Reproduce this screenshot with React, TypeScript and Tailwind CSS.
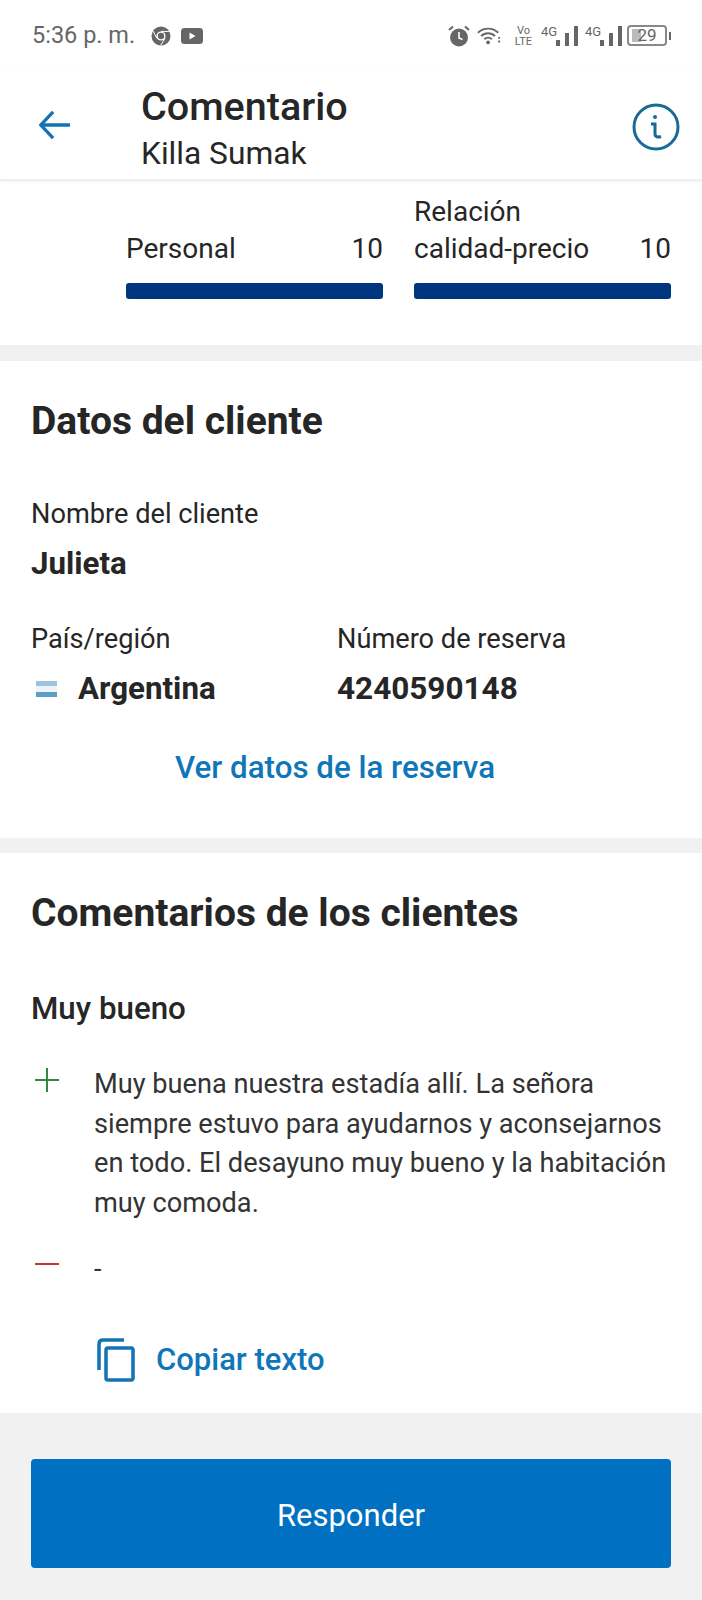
import React from 'react';

function StatusBar() {
  return (
    <div className="h-[71px] flex items-center justify-between pl-8 pr-[31px] text-[#666]">
      <div className="flex items-center">
        <span className="text-[23.5px] leading-none mr-[16px]">5:36 p. m.</span>
        <svg width="20" height="20" viewBox="0 0 20 20" className="mr-[10px]">
          <circle cx="10" cy="10" r="9.5" fill="#666" />
          <circle cx="10" cy="10" r="4.6" fill="#fff" />
          <circle cx="10" cy="10" r="3.2" fill="#666" />
          <path d="M10 5.4h8.6M6 12.5 2 5M14 12.5 9.500 19.400" stroke="#fff" strokeWidth="1" />
        </svg>
        <svg width="22" height="16" viewBox="0 0 22 16">
          <rect width="22" height="16" rx="3.5" fill="#666" />
          <path d="M8.5 4.500v7l6-3.500z" fill="#fff" />
        </svg>
      </div>
      <div className="flex items-center">
        <svg width="22" height="22" viewBox="0 0 22 22" className="mr-[7px]">
          <circle cx="11" cy="12.5" r="9" fill="#666" />
          <path d="M11 7v6l3.500 1.500" stroke="#fff" strokeWidth="1.6" fill="none" />
          <path d="M1 5l4-3.500M21 5l-4-3.500" stroke="#666" strokeWidth="2" />
        </svg>
        <svg width="24" height="20" viewBox="0 0 26 20" className="mr-[13px]">
          <path d="M1 6.500c6-6 16-6 22 0M4.500 10c4-4 11-4 15 0M8 13.500c2.300-2.200 5.700-2.200 8 0" stroke="#666" strokeWidth="2" fill="none" />
          <circle cx="12" cy="17" r="2" fill="#666" />
          <path d="M24 11v2M24 15v2" stroke="#666" strokeWidth="2" />
        </svg>
        <div className="flex flex-col items-center text-[11px] leading-[11px] w-[19px] mr-[8px]">
          <span>Vo</span>
          <span>LTE</span>
        </div>
        <Signal />
        <Signal />
        <div className="flex items-center -ml-[2px]">
          <div className="relative w-[40px] h-[21px] border-2 border-[#888] rounded-[4px] flex items-center justify-center text-[17px] leading-none">
            <div className="absolute left-[3px] top-[2px] bottom-[2px] w-[9px] bg-[#bbb]" />
            <span className="relative">29</span>
          </div>
          <div className="w-[2px] h-[8px] bg-[#666] ml-[2px]" />
        </div>
      </div>
    </div>
  );
}

function Signal() {
  return (
    <div className="flex items-end h-[21px] w-[44px]">
      <span className="text-[13px] leading-none self-start w-[15px] whitespace-nowrap">4G</span>
      <div className="flex items-end gap-[5px]">
        <div className="w-[4px] h-[6px] bg-[#666]" />
        <div className="w-[4px] h-[13px] bg-[#666]" />
        <div className="w-[4px] h-[20px] bg-[#666]" />
      </div>
    </div>
  );
}

function Header() {
  return (
    <div className="h-[110px] flex items-start bg-white border-b-2 border-[#eee] relative shadow-[0_1px_3px_rgba(0,0,0,0.05)]">
      <svg width="32" height="32" viewBox="0 0 34 34" className="ml-[39px] mt-[38px]" fill="none" stroke="#1273b5" strokeWidth="3.500">
        <path d="M1 17h32M15 3 2 17l13 14" />
      </svg>
      <div className="ml-[70px] mt-[14px]">
        <div className="text-[39.5px] leading-[44px] font-medium text-[#262626]">Comentario</div>
        <div className="text-[31.700px] leading-[36px] text-[#262626] mt-[7px]">Killa Sumak</div>
      </div>
      <svg width="48" height="48" viewBox="0 0 48 48" className="ml-auto mr-[22px] mt-[32px]" fill="none" stroke="#176b95" strokeWidth="3">
        <circle cx="24" cy="24" r="22" />
        <circle cx="23" cy="14" r="2" fill="#176b95" stroke="none" />
        <path d="M19 21h4v10c0 3 3 3.500 6 2.500" />
      </svg>
    </div>
  );
}

function Score({ label, sub }: { label: string; sub?: string }) {
  return (
    <div className="w-[257px]">
      <div className="flex justify-between items-end text-[28px] leading-[37px] text-[#262626]">
        <div>
          {sub && <div>{sub}</div>}
          <div>{label}</div>
        </div>
        <div>10</div>
      </div>
      <div className="h-[16px] bg-[#003580] rounded-[3px] mt-[16px]" />
    </div>
  );
}

export default function App() {
  return (
    <div className="w-[702px] h-[1600px] bg-white flex flex-col overflow-hidden font-['Roboto',sans-serif]">
      <StatusBar />
      <Header />

      <section className="h-[160px] flex justify-end gap-[31px] pr-[31px] pt-[4px] border-b-[16px] border-[#f1f1f1] box-content">
        <div className="flex gap-[31px] items-end h-[114px]">
          <Score label="Personal" />
          <Score sub="Relación" label="calidad-precio" />
        </div>
      </section>

      <section className="h-[477px] px-[31px] pt-[38px] text-[#262626] flex flex-col">
        <h2 className="text-[39px] leading-[44px] font-bold">Datos del cliente</h2>
        <div className="text-[27.200px] leading-[34px] mt-[54px]">Nombre del cliente</div>
        <div className="text-[31.300px] leading-[38px] font-bold mt-[14px]">Julieta</div>
        <div className="flex mt-[39px]">
          <div className="w-[306px]">
            <div className="text-[27.200px] leading-[34px]">País/región</div>
            <div className="flex items-center mt-[14px]">
              <div className="w-[21px] h-[16px] flex flex-col mr-[21px] ml-[5px]">
                <div className="flex-1 bg-[#9cc4e0]" />
                <div className="flex-1 bg-[#eef4f8]" />
                <div className="flex-1 bg-[#5b9fc4]" />
              </div>
              <span className="text-[31.300px] leading-[38px] font-bold">Argentina</span>
            </div>
          </div>
          <div>
            <div className="text-[27.200px] leading-[34px]">Número de reserva</div>
            <div className="text-[31.500px] leading-[38px] font-bold mt-[14px]">4240590148</div>
          </div>
        </div>
        <div className="text-[31.300px] leading-[38px] font-medium text-[#0f76b8] text-center pr-[32px] mt-[41px]">Ver datos de la reserva</div>
      </section>

      <div className="h-[15px] bg-[#f1f1f1]" />

      <section className="flex-1 px-[31px] pt-[38px] text-[#262626]">
        <h2 className="text-[39px] leading-[44px] font-bold">Comentarios de los clientes</h2>
        <div className="text-[31.300px] leading-[38px] font-medium mt-[55px]">Muy bueno</div>
        <div className="flex mt-[37px]">
          <svg width="24" height="24" viewBox="0 0 24 24" className="mt-[3px] ml-[4px] shrink-0" stroke="#2e8b3d" strokeWidth="2">
            <path d="M0 12h24M12 0v24" />
          </svg>
          <p className="ml-[35px] text-[27.200px] leading-[39.500px] text-[#333] w-[585px]">
            Muy buena nuestra estadía allí. La señora siempre estuvo para ayudarnos y aconsejarnos en todo. El desayuno muy bueno y la habitación muy comoda.
          </p>
        </div>
        <div className="flex mt-[29px]">
          <div className="w-[24px] h-[2px] bg-[#c8323c] mt-[11px] ml-[4px] shrink-0" />
          <div className="ml-[35px] text-[27px] leading-[34px] text-[#333]">-</div>
        </div>
        <div className="flex items-center ml-[66px] mt-[52px]">
          <svg width="38" height="44" viewBox="0 0 38 44" fill="none" stroke="#1273b5" strokeWidth="3.500">
            <path d="M2 32V6q0-4 4-4h21" />
            <rect x="9" y="10" width="27" height="32" rx="2" />
          </svg>
          <span className="text-[31px] leading-[38px] font-medium text-[#0f76b8] ml-[21px]">Copiar texto</span>
        </div>
      </section>

      <div className="h-[187px] bg-[#f1f1f1] px-[31px] pt-[46px]">
        <div className="h-[109px] pt-[5px] bg-[#0071c2] rounded-[4px] flex items-center justify-center text-white text-[31px]">Responder</div>
      </div>
    </div>
  );
}
